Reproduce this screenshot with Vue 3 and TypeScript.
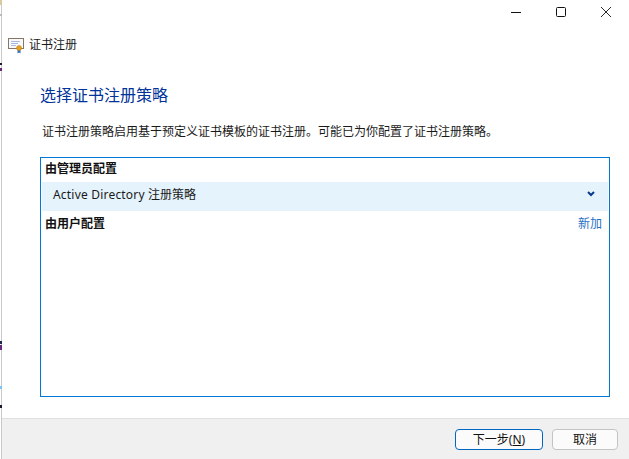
<script setup lang="ts">
const title = '证书注册'
const edgeMarks = [
  { top: 0, height: 5, color: '#d8c9a0' },
  { top: 14, height: 2, color: '#bbbbbb' },
  { top: 63, height: 2, color: '#1a1a2a' },
  { top: 68, height: 3, color: '#6a2a7a' },
  { top: 341, height: 3, color: '#1a2a4a' },
  { top: 345, height: 5, color: '#6a2a7a' },
  { top: 386, height: 3, color: '#7cc4f5' },
  { top: 405, height: 3, color: '#1a1a2a' },
]
</script>

<template>
  <div class="window">
    <i
      v-for="m in edgeMarks"
      :key="m.top"
      class="edge"
      :style="{ top: m.top + 'px', height: m.height + 'px', background: m.color }"
    ></i>
    <div class="titlebar">
      <button class="cap" aria-label="最小化">
        <svg width="10" height="10" viewBox="0 0 10 10"><path d="M0 5.5H10" stroke="#111" fill="none" /></svg>
      </button>
      <button class="cap" aria-label="最大化">
        <svg width="10" height="10" viewBox="0 0 10 10"><rect x=".5" y=".5" width="9" height="9" rx="1" stroke="#111" fill="none" /></svg>
      </button>
      <button class="cap" aria-label="关闭">
        <svg width="10" height="10" viewBox="0 0 10 10"><path d="M0 0L10 10M10 0L0 10" stroke="#111" fill="none" stroke-width=".9" /></svg>
      </button>
    </div>
    <div class="apphead">
      <svg class="cert" width="16" height="16" viewBox="0 0 16 16">
        <rect x=".5" y=".5" width="15" height="10" fill="#f7f9fd" stroke="#8a7462" />
        <path d="M3 3.5H12M3 5.5H10M3 7.5H8" stroke="#a9b8de" fill="none" />
        <path d="M9.5 11V15.5L11 14.5L12.5 15.5V11Z" fill="#2f6fc4" />
        <circle cx="11" cy="10" r="2.5" fill="#e5a01e" stroke="#b97a10" stroke-width=".5" />
      </svg>
      <span>{{ title }}</span>
    </div>
    <main class="content">
      <h1>选择证书注册策略</h1>
      <p class="intro">证书注册策略启用基于预定义证书模板的证书注册。可能已为你配置了证书注册策略。</p>
      <section class="box">
        <div class="group">由管理员配置</div>
        <div class="policy">
          <span><span class="latin">Active Directory</span> 注册策略</span>
          <svg width="8" height="6" viewBox="0 0 8 6"><path d="M1 1L4 4L7 1" stroke="#0b3a8c" stroke-width="2" fill="none" /></svg>
        </div>
        <div class="group user">
          <span>由用户配置</span>
          <a class="add">新加</a>
        </div>
      </section>
    </main>
    <footer class="footer">
      <button class="btn primary">下一步(<u>N</u>)</button>
      <button class="btn">取消</button>
    </footer>
  </div>
</template>

<style>
html, body { margin: 0; background: #fff; }
</style>

<style scoped>
.window {
  position: relative;
  width: 628px;
  height: 459px;
  margin-left: 1px;
  box-sizing: border-box;
  border-left: 1px solid #c9c9c9;
  display: flex;
  flex-direction: column;
  background: #fff;
  color: #1a1a1a;
  font-family: "Noto Sans", "Noto Sans CJK SC", sans-serif;
  font-size: 12px;
}
.edge {
  position: absolute;
  left: -2px;
  width: 2px;
}
.titlebar {
  height: 24px;
  padding-right: 1px;
  display: flex;
  justify-content: flex-end;
  flex: none;
}
.cap {
  width: 45px;
  height: 24px;
  border: 0;
  padding: 0;
  background: none;
  display: flex;
  align-items: center;
  justify-content: center;
}
.apphead {
  height: 32px;
  padding: 5px 0 0 6px;
  display: flex;
  align-items: center;
  gap: 5px;
  flex: none;
  font-size: 12px;
  line-height: 16px;
}
.cert { flex: none; margin-top: 1px; }
.content {
  flex: 1;
  padding: 0 19px 0 38px;
  display: flex;
  flex-direction: column;
  min-height: 0;
}
h1 {
  margin: 24px 0 0;
  font-size: 16px;
  font-weight: 400;
  line-height: 20px;
  color: #003399;
}
.intro {
  margin: 18px 0 0 2px;
  line-height: 18px;
  white-space: nowrap;
}
.box {
  margin-top: 16px;
  height: 240px;
  box-sizing: border-box;
  border: 1px solid #0078d7;
  padding: 1px 1px 0 1px;
}
.group {
  height: 20px;
  line-height: 20px;
  padding-left: 3px;
  font-weight: 700;
  color: #111;
}
.policy {
  height: 29px;
  box-sizing: border-box;
  margin-top: 3px;
  background: #e5f3fd;
  display: flex;
  align-items: center;
  justify-content: space-between;
  padding: 0 13px 5px 11px;
}
.latin { letter-spacing: .2px; }
.user {
  margin-top: 3px;
  display: flex;
  justify-content: space-between;
  padding-right: 6px;
}
.add {
  font-weight: 400;
  color: #1f6fc8;
}
.footer {
  height: 41px;
  flex: none;
  box-sizing: border-box;
  border-top: 1px solid #dfdfdf;
  background: #f0f0f0;
  display: flex;
  justify-content: flex-end;
  align-items: center;
  gap: 9px;
  padding: 0 11px 0 0;
}
.btn {
  width: 66px;
  height: 21px;
  box-sizing: border-box;
  padding: 0;
  border: 1px solid #c4c4c4;
  border-radius: 4px;
  background: #fbfbfb;
  font: inherit;
  line-height: 17px;
  color: #111;
}
.primary {
  width: 88px;
  border-color: #0067c0;
}
</style>
